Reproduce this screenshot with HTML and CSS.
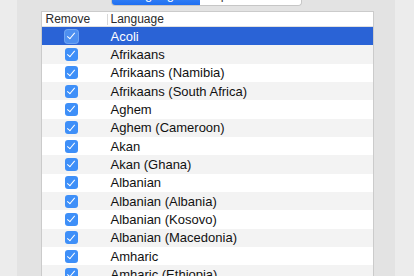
FILE: index.html
```html
<!DOCTYPE html>
<html>
  <head>
    <title>Languages</title>
    <link rel="stylesheet" href="styles.css">
  </head>
  <body>
    <div class="paneel">
      <div class="strook">
        <div class="segmenten">
          <span class="segment actief">Languages</span>
          <span class="segment">Input Sources</span>
        </div>
      </div>
      <div class="tabel">
        <div class="kop">
          <span class="kol-remove">Remove</span>
          <span class="kol-taal">Language</span>
        </div>
        <div class="rij gekozen"><span class="cel-vink"><span class="vink"></span></span><span class="cel-taal">Acoli</span></div>
        <div class="rij"><span class="cel-vink"><span class="vink"></span></span><span class="cel-taal">Afrikaans</span></div>
        <div class="rij"><span class="cel-vink"><span class="vink"></span></span><span class="cel-taal">Afrikaans (Namibia)</span></div>
        <div class="rij"><span class="cel-vink"><span class="vink"></span></span><span class="cel-taal">Afrikaans (South Africa)</span></div>
        <div class="rij"><span class="cel-vink"><span class="vink"></span></span><span class="cel-taal">Aghem</span></div>
        <div class="rij"><span class="cel-vink"><span class="vink"></span></span><span class="cel-taal">Aghem (Cameroon)</span></div>
        <div class="rij"><span class="cel-vink"><span class="vink"></span></span><span class="cel-taal">Akan</span></div>
        <div class="rij"><span class="cel-vink"><span class="vink"></span></span><span class="cel-taal">Akan (Ghana)</span></div>
        <div class="rij"><span class="cel-vink"><span class="vink"></span></span><span class="cel-taal">Albanian</span></div>
        <div class="rij"><span class="cel-vink"><span class="vink"></span></span><span class="cel-taal">Albanian (Albania)</span></div>
        <div class="rij"><span class="cel-vink"><span class="vink"></span></span><span class="cel-taal">Albanian (Kosovo)</span></div>
        <div class="rij"><span class="cel-vink"><span class="vink"></span></span><span class="cel-taal">Albanian (Macedonia)</span></div>
        <div class="rij"><span class="cel-vink"><span class="vink"></span></span><span class="cel-taal">Amharic</span></div>
        <div class="rij"><span class="cel-vink"><span class="vink"></span></span><span class="cel-taal">Amharic (Ethiopia)</span></div>
      </div>
    </div>
  </body>
</html>
```
FILE: styles.css
```css
html, body {
  margin: 0;
  height: 276px;
  overflow: hidden;
}
body {
  background-color: #ececec;
  font-family: "Liberation Sans", Arial, sans-serif;
  padding: 0 19px 0 17px;
}
.paneel {
  background-color: #e3e3e3;
  height: 276px;
  overflow: hidden;
  display: flex;
  flex-direction: column;
  align-items: center;
}
.strook {
  height: 6px;
  width: 191px;
  overflow: hidden;
  display: flex;
  align-items: flex-end;
  flex-shrink: 0;
}
.segmenten {
  display: flex;
  height: 20px;
  flex-shrink: 0;
  border: 1px solid #c6c6c6;
  border-top: none;
  border-radius: 0 0 4px 4px;
  overflow: hidden;
  font-size: 13px;
}
.segment {
  width: 101px;
  flex-shrink: 0;
  background-color: #ffffff;
  color: #444;
  text-align: center;
  line-height: 19px;
}
.segment.actief {
  width: 88px;
  background: linear-gradient(#5aa0fa, #1f6ff2);
  color: white;
}
.tabel {
  margin-top: 5px;
  width: 331px;
  margin-left: 2px;
  flex-shrink: 0;
  background-color: white;
  border: 1px solid #cbcbcb;
  border-bottom: none;
}
.kop {
  height: 14px;
  display: flex;
  align-items: center;
  font-size: 12px;
  color: #2a2a2a;
  border-bottom: 1px solid #e0e0e0;
}
.kol-remove {
  width: 65px;
  padding-left: 4px;
  box-sizing: border-box;
}
.kol-taal {
  border-left: 1px solid #d8d8d8;
  padding-left: 3px;
  line-height: 11px;
}
.rij {
  height: 18.33px;
  display: flex;
  align-items: center;
  font-size: 13px;
  color: #111;
}
.rij:nth-child(odd) {
  background-color: #f3f3f3;
}
.rij.gekozen {
  background-color: #2a63d6;
  color: white;
}
.cel-vink {
  width: 60px;
  display: flex;
  justify-content: center;
}
.vink {
  width: 13px;
  height: 13px;
  border-radius: 3px;
  background-color: #3e8ff8;
  position: relative;
}
.vink::after {
  content: "";
  position: absolute;
  left: 4px;
  top: 1.5px;
  width: 3px;
  height: 7px;
  border: solid white;
  border-width: 0 1.6px 1.6px 0;
  transform: rotate(40deg);
}
.gekozen .vink {
  background-color: #4d8ff0;
  box-shadow: 0 0 0 1px #6ea4f2;
}
.cel-taal {
  padding-left: 9px;
}
```
